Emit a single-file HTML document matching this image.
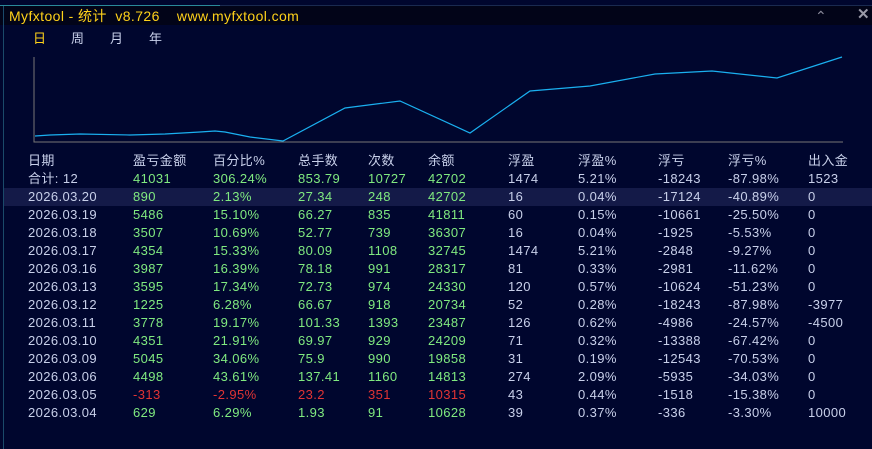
<!DOCTYPE html>
<html><head><meta charset="utf-8"><style>
body{margin:0;width:872px;height:449px;background:#00062e;overflow:hidden;position:relative;font-family:"Liberation Sans","Noto Sans CJK SC",sans-serif;}
.title{position:absolute;left:0;top:6px;width:872px;height:19px;background:#020418;}
.t{position:absolute;white-space:nowrap;font-size:13px;line-height:16px;color:#c8d0ea;letter-spacing:0.4px;}
.g{color:#80ea80}.r{color:#e03434}
.hl{position:absolute;left:4px;top:188px;width:868px;height:18px;background:#141a48;}
</style></head><body>
<div style="position:absolute;left:0;top:5px;width:220px;height:1px;background:#2a8a9a"></div>
<div style="position:absolute;left:220px;top:5px;width:652px;height:1px;background:#1a2a50"></div>
<div class="title"></div>
<div style="position:absolute;left:3px;top:6px;width:1px;height:443px;background:#1a4a6a"></div>
<div class="t" style="left:9px;top:8px;font-size:14px;color:#ffd21a">Myfxtool - 统计&nbsp; v8.726&nbsp;&nbsp;&nbsp; www.myfxtool.com</div>
<div class="t" style="left:815px;top:8px;color:#8a8a9a;font-size:14px">⌃</div>
<div class="t" style="left:857px;top:7px;color:#9a9aa8;font-size:15px;font-weight:bold">✕</div>
<div class="t" style="left:33px;top:31px;color:#ffd21a">日</div>
<div class="t" style="left:71px;top:31px">周</div>
<div class="t" style="left:110px;top:31px">月</div>
<div class="t" style="left:149px;top:31px">年</div>
<svg style="position:absolute;left:0;top:0" width="872" height="449">
<polyline points="34,57 34,142 843,142" fill="none" stroke="#777" stroke-width="1"/>
<polyline points="35,136 50,135 80,134 130,135 165,134 200,132 215,131 225,132 250,137 283,141 345,108 400,101 470,133 530,91 590,86 655,74 712,71 777,78 842,57" fill="none" stroke="#1ab0f0" stroke-width="1.2"/>
</svg>
<div class="hl"></div>
<div id="tb"></div>
<script>
const cols=[28,133,213,298,368,428,508,578,658,728,808];
const rows=[
["日期","盈亏金额","百分比%","总手数","次数","余额","浮盈","浮盈%","浮亏","浮亏%","出入金"],
["合计: 12","41031","306.24%","853.79","10727","42702","1474","5.21%","-18243","-87.98%","1523"],
["2026.03.20","890","2.13%","27.34","248","42702","16","0.04%","-17124","-40.89%","0"],
["2026.03.19","5486","15.10%","66.27","835","41811","60","0.15%","-10661","-25.50%","0"],
["2026.03.18","3507","10.69%","52.77","739","36307","16","0.04%","-1925","-5.53%","0"],
["2026.03.17","4354","15.33%","80.09","1108","32745","1474","5.21%","-2848","-9.27%","0"],
["2026.03.16","3987","16.39%","78.18","991","28317","81","0.33%","-2981","-11.62%","0"],
["2026.03.13","3595","17.34%","72.73","974","24330","120","0.57%","-10624","-51.23%","0"],
["2026.03.12","1225","6.28%","66.67","918","20734","52","0.28%","-18243","-87.98%","-3977"],
["2026.03.11","3778","19.17%","101.33","1393","23487","126","0.62%","-4986","-24.57%","-4500"],
["2026.03.10","4351","21.91%","69.97","929","24209","71","0.32%","-13388","-67.42%","0"],
["2026.03.09","5045","34.06%","75.9","990","19858","31","0.19%","-12543","-70.53%","0"],
["2026.03.06","4498","43.61%","137.41","1160","14813","274","2.09%","-5935","-34.03%","0"],
["2026.03.05","-313","-2.95%","23.2","351","10315","43","0.44%","-1518","-15.38%","0"],
["2026.03.04","629","6.29%","1.93","91","10628","39","0.37%","-336","-3.30%","10000"]];
let h="";
rows.forEach((r,i)=>{const y=i==0?153:(i==1?171:171+(i-1)*18);
r.forEach((c,j)=>{let cl="";if(i>0&&j>=1&&j<=5)cl=(r[1][0]=="-")?"r":"g";
h+=`<div class="t ${cl}" style="left:${cols[j]}px;top:${y}px">${c}</div>`;});});
document.getElementById("tb").innerHTML=h;
</script>
</body></html>
